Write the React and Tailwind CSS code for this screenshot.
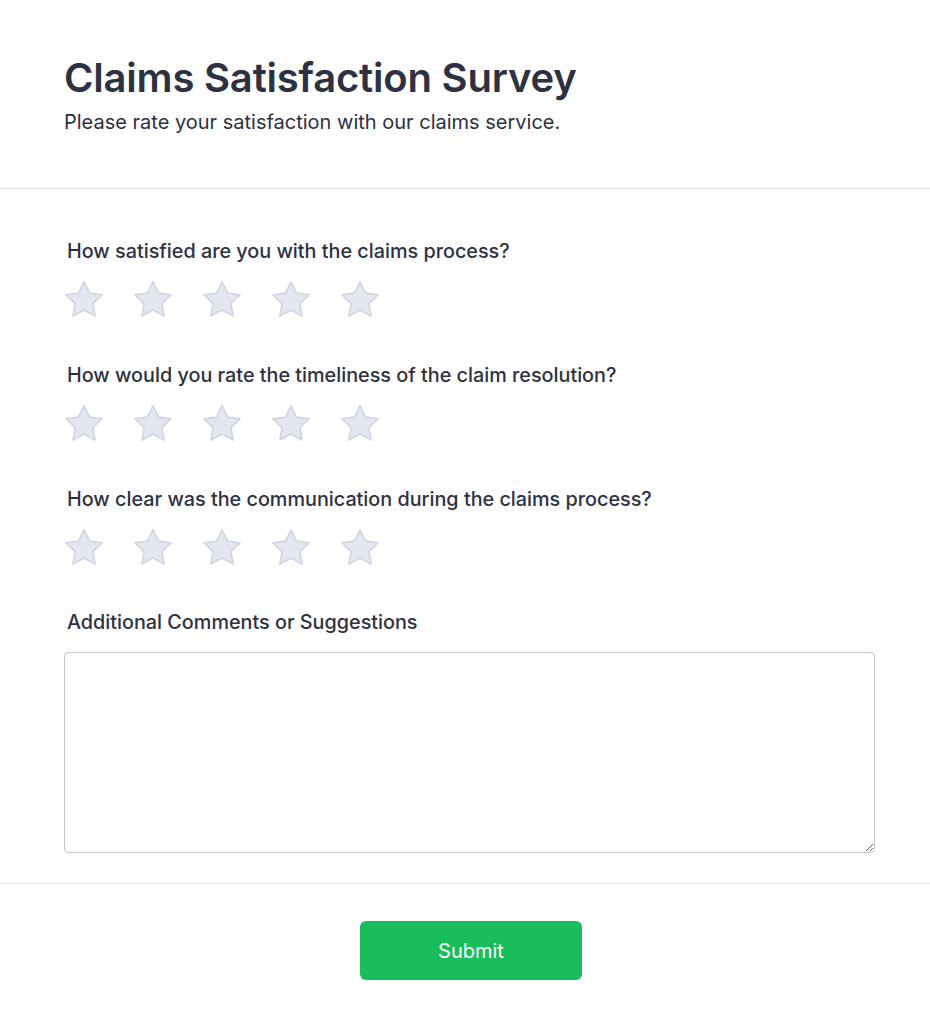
import { useState } from 'react';

const QUESTIONS = [
  'How satisfied are you with the claims process?',
  'How would you rate the timeliness of the claim resolution?',
  'How clear was the communication during the claims process?',
];

function Star({ filled }) {
  return (
    <svg viewBox="1.5 1.6 21 21" className="w-10 h-10" aria-hidden="true">
      <path
        d="M12 2.6l2.9 5.9 6.5.9-4.7 4.6 1.1 6.5L12 17.4l-5.8 3.1 1.1-6.5-4.7-4.6 6.5-.9z"
        fill={filled ? '#facc15' : '#e5e7f0'}
        stroke={filled ? '#eab308' : '#d2d5e2'}
        strokeWidth="0.9"
        strokeLinejoin="round"
      />
    </svg>
  );
}

function StarRating({ value, onChange }) {
  return (
    <div className="flex gap-[29px] mt-[15px]">
      {[1, 2, 3, 4, 5].map(n => (
        <button key={n} type="button" onClick={() => onChange(n)} aria-label={`${n} stars`}>
          <Star filled={n <= value} />
        </button>
      ))}
    </div>
  );
}

export default function App() {
  const [ratings, setRatings] = useState([0, 0, 0]);
  const [comments, setComments] = useState('');

  function setRating(i, n) {
    setRatings(prev => prev.map((r, idx) => (idx === i ? n : r)));
  }

  return (
    <div className="min-h-[1030px] bg-white text-[#2d3142] font-['Inter','Noto_Sans',sans-serif]">
      {/* Header */}
      <div className="px-16 pt-[54px] pb-[52px] border-b border-[#dcdcec]">
        <h1 className="text-[40px] leading-[48px] font-semibold tracking-[-0.2px]">Claims Satisfaction Survey</h1>
        <p className="mt-1.5 text-[20px] leading-7">Please rate your satisfaction with our claims service.</p>
      </div>

      {/* Questions */}
      <div className="pl-16 pr-[55px] pt-12 pb-[30px] border-b border-[#e8e9f0]">
        <div className="flex flex-col gap-[41px]">
          {QUESTIONS.map((q, i) => (
            <div key={q}>
              <p className="pl-[3px] text-[19.8px] leading-7 font-medium">{q}</p>
              <StarRating value={ratings[i]} onChange={n => setRating(i, n)} />
            </div>
          ))}
        </div>
        <div className="mt-10">
          <label htmlFor="comments" className="block pl-[3px] text-[19.8px] leading-7 font-medium">
            Additional Comments or Suggestions
          </label>
          <textarea
            id="comments"
            value={comments}
            onChange={e => setComments(e.target.value)}
            className="mt-4 block w-full h-[201px] border border-[#c3c6d4] rounded p-3 text-base"
          />
        </div>
      </div>

      {/* Footer */}
      <div className="flex justify-center pl-3 pt-[37px] pb-[50px]">
        <button className="w-[222px] h-[59px] rounded-md bg-[#19bd5b] text-white text-[20px]">
          Submit
        </button>
      </div>
    </div>
  );
}
